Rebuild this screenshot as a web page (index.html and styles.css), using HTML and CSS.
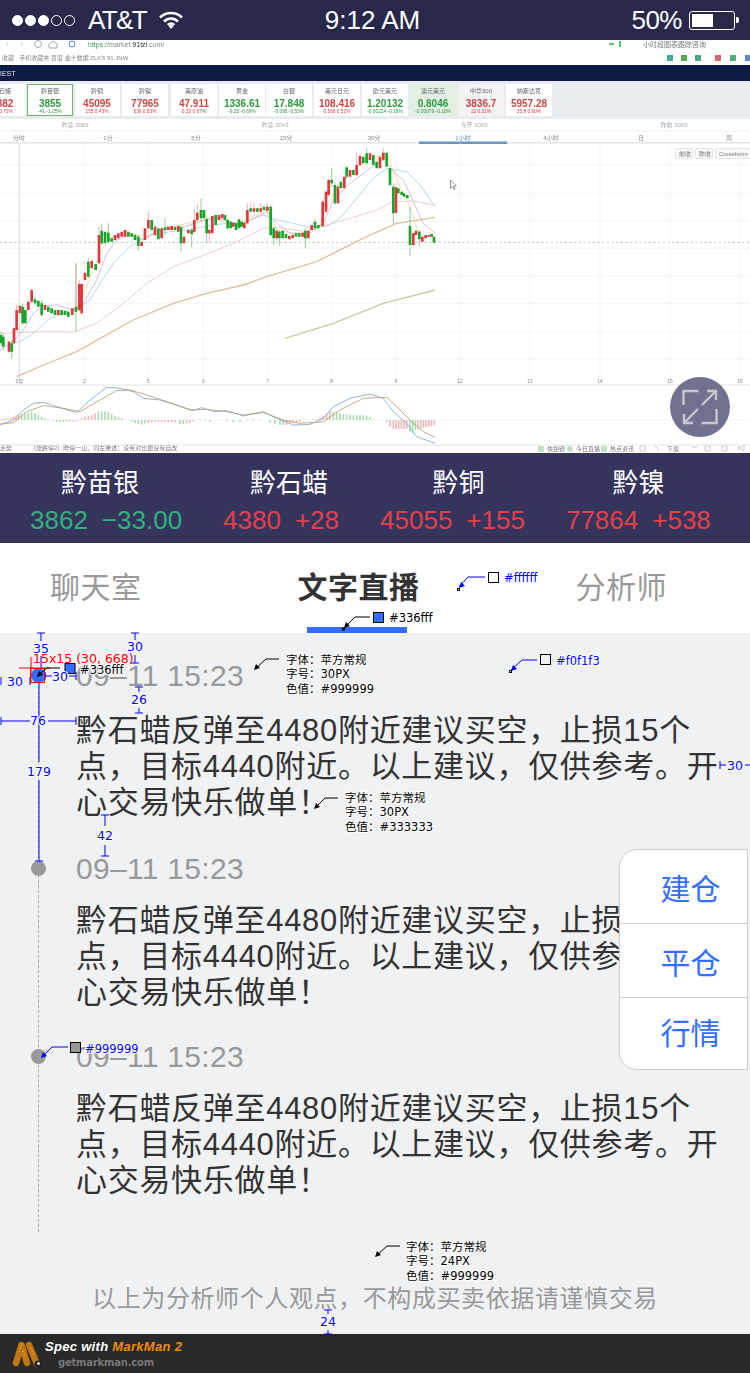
FILE: index.html
```html
<!DOCTYPE html>
<html lang="zh-CN">
<head>
<meta charset="utf-8">
<title>文字直播</title>
<link rel="stylesheet" href="styles.css">
</head>
<body>
<div class="page">
  <header class="status">
    <div class="status-left">
      <span class="sig"><i class="on"></i><i class="on"></i><i class="on"></i><i></i><i></i></span>
      <span class="carrier">AT&amp;T</span>
      <svg class="wifi" viewBox="0 0 24 18"><path d="M1 6.500C7 .5 17 .5 23 6.500" /><path d="M5 10.500c4-4 10-4 14 0"/><path d="M8.800 14c2-2 4.400-2 6.400 0"/><path class="wifi-dot" d="M12 18l-2.500-3c1.500-1.200 3.500-1.200 5 0z"/></svg>
    </div>
    <div class="status-time">9:12 AM</div>
    <div class="status-right"><span class="pct">50%</span><span class="batt"><i></i></span></div>
  </header>

  <section class="video">
    <svg class="shot" viewBox="0 40 750 413" aria-label="行情图">
      <rect x="0" y="40" width="750" height="413" fill="#fff"/>
      <!-- browser chrome -->
      <g class="t7" fill="#888">
        <text x="6" y="46.500" font-size="9" fill="#bbb">‹</text>
        <text x="20" y="46.500" font-size="9" fill="#bbb">›</text>
        <circle cx="38" cy="44" r="3.500" fill="none" stroke="#aaa"/>
        <path d="M49 47.500v-4l4-3 4 3v4z" fill="none" stroke="#aaa" transform="translate(0 .5)"/>
        <circle cx="72" cy="44" r="3" fill="none" stroke="#4a90d9"/>
        <text x="88" y="46.500"><tspan fill="#3c9a60">https://</tspan>market.<tspan fill="#333">91tzi</tspan>.com/</text>
        <text x="643" y="46.500" fill="#777">小时段图表跟踪咨询</text>
        <text x="2" y="60" font-size="6">收藏 · 手机收藏夹  百度  金十数据  ZLKS  91 JNW</text>
      </g>
      <path d="M609 44h5M620 41v6" stroke="#3a3" stroke-width="1.500"/>
      <g>
        <rect x="667" y="55" width="6" height="6" fill="#4a9"/><rect x="681" y="55" width="6" height="6" fill="#5a5"/>
        <rect x="695" y="55" width="6" height="6" fill="#4a8"/><rect x="715" y="55" width="6" height="6" fill="#d66"/>
        <rect x="730" y="55" width="6" height="6" fill="#5a7"/><rect x="745" y="55" width="5" height="6" fill="#58c"/>
      </g>
      <rect x="0" y="65" width="750" height="16" fill="#0c1a45"/>
      <text x="0" y="76" class="t7" fill="#dfe3ee">IEST</text>
      <rect x="0" y="81" width="750" height="38" fill="#e9ecee"/>
      <!-- quote tiles -->
      <g class="tile-bg" fill="#fff">
        <rect x="0" y="84" width="25" height="32"/>
        <rect x="27.500" y="84.500" width="45" height="31" stroke="#6fb56f" stroke-width="1"/>
        <rect x="75" y="84" width="45" height="32"/><rect x="122" y="84" width="46" height="32"/>
        <rect x="171" y="84" width="46" height="32"/><rect x="219" y="84" width="46" height="32"/>
        <rect x="266" y="84" width="46" height="32"/><rect x="314" y="84" width="46" height="32"/>
        <rect x="362" y="84" width="46" height="32"/><rect x="410" y="84" width="46" height="32" fill="#e4efe4"/>
        <rect x="458" y="84" width="46" height="32" fill="#f3f3f3"/><rect x="506" y="84" width="46" height="32"/>
      </g>
      <g class="tname" text-anchor="middle" fill="#666">
        <text x="5" y="93">石蜡</text><text x="50" y="93">黔苗银</text><text x="97" y="93">黔铜</text><text x="145" y="93">黔镍</text>
        <text x="194" y="93">美原油</text><text x="242" y="93">黄金</text><text x="289" y="93">白银</text><text x="337" y="93">美元日元</text>
        <text x="385" y="93">欧元美元</text><text x="433" y="93">澳元美元</text><text x="481" y="93">中华300</text><text x="529" y="93">纳斯达克</text>
      </g>
      <g class="tprice" text-anchor="middle">
        <text x="5" y="107" fill="#d04545">382</text><text x="50" y="107" fill="#2c9a3c">3855</text><text x="97" y="107" fill="#d04545">45095</text>
        <text x="145" y="107" fill="#d04545">77965</text><text x="194" y="107" fill="#d04545">47.911</text><text x="242" y="107" fill="#2c9a3c">1336.61</text>
        <text x="289" y="107" fill="#2c9a3c">17.848</text><text x="337" y="107" fill="#d04545">108.416</text><text x="385" y="107" fill="#2c9a3c">1.20132</text>
        <text x="433" y="107" fill="#2c9a3c">0.8046</text><text x="481" y="107" fill="#d04545">3836.7</text><text x="529" y="107" fill="#d04545">5957.28</text>
      </g>
      <g class="tsub" text-anchor="middle">
        <text x="6" y="113" fill="#d04545">0.71%</text><text x="50" y="113" fill="#2c9a3c">-41  -1.05%</text><text x="97" y="113" fill="#d04545">155  0.43%</text>
        <text x="145" y="113" fill="#d04545">639  0.83%</text><text x="194" y="113" fill="#d04545">0.32  0.67%</text><text x="242" y="113" fill="#2c9a3c">-9.25  -0.69%</text>
        <text x="289" y="113" fill="#2c9a3c">-0.095  -0.53%</text><text x="337" y="113" fill="#d04545">0.566  0.52%</text><text x="385" y="113" fill="#2c9a3c">-0.00224  -0.19%</text>
        <text x="433" y="113" fill="#2c9a3c">-0.00079  -0.10%</text><text x="481" y="113" fill="#d04545">12  0.31%</text><text x="529" y="113" fill="#d04545">35.8  0.60%</text>
      </g>
      <g class="tname" text-anchor="middle" fill="#aaa">
        <text x="75" y="127">昨总 3069</text><text x="275" y="127">昨总 3043</text><text x="474" y="127">今开 3069</text><text x="674" y="127">昨收 3069</text>
      </g>
      <path d="M0 131H750" stroke="#eee"/>
      <g class="tname" text-anchor="middle" fill="#888">
        <text x="19" y="140">分时</text><text x="108" y="140">1分</text><text x="196" y="140">5分</text><text x="286" y="140">15分</text><text x="374" y="140">30分</text>
        <text x="463" y="140" fill="#5b8fc7">1小时</text><text x="551" y="140">4小时</text><text x="641" y="140">日</text><text x="729" y="140">周</text>
      </g>
      <rect x="0" y="142" width="750" height="1.500" fill="#e4e4e4"/>
      <rect x="419" y="141.500" width="88" height="2.500" fill="#6b93bd"/>
      <!-- buttons -->
      <g fill="#fafafa" stroke="#e2e2e2">
        <rect x="675.500" y="148.500" width="17" height="10" rx="1.500"/><rect x="695.500" y="148.500" width="17" height="10" rx="1.500"/><rect x="715.500" y="148.500" width="40" height="10" rx="1.500"/>
      </g>
      <g class="tname" fill="#777">
        <text x="679" y="156">前收</text><text x="699" y="156">昨收</text><text x="719" y="156">Crosshairs</text>
      </g>
      <path d="M450.500 180v8.500l2-2 1.500 3 1.200-.6-1.500-2.900 2.600-.2z" fill="#fff" stroke="#666" stroke-width=".7"/>
      <text x="30" y="450" class="t6" fill="#777">（涨跌停2）昨停一山，同左重述；没有对比更没有自改</text>
      <text x="0" y="450" class="t6" fill="#777">走势</text>
      <g class="t6" fill="#777">
        <rect x="538" y="446" width="6" height="6" fill="#bfe3c8"/><text x="547" y="451">快捷键</text>
        <circle cx="570" cy="449" r="3" fill="#bfe3c8"/><text x="576" y="451">今日直播</text>
        <rect x="601" y="446" width="6" height="6" fill="#bfe3c8"/><text x="610" y="451">热点资讯</text>
        <text x="667" y="451">下载</text>
      </g>
      <path d="M640 446h5v5h-5zM655 446l4 4M692 447h5M705 446h5v5h-5zM722 446h5v5h-5zM738 447h3l3-2v6l-3-2h-3z" fill="none" stroke="#bbb" stroke-width=".8"/>

      <!-- chart drawn in 3x units -->
      <g transform="translate(0 140) scale(.33333)">
        <path class="grid" d="M0 75H2250M0 160H2250M0 243H2250M0 325H2250M0 408H2250M0 490H2250M0 575H2250M0 657H2250M253 10V735M445 10V735M610 10V735M803 10V735M995 10V735M1188 10V735M1380 10V735M1590 10V735M1800 10V735M2010 10V735M2220 10V735M0 840H2250"/>
        <path d="M58 10V735" stroke="#ddd" stroke-width="3" fill="none"/>
        <path d="M0 735H2250M0 915H2250" stroke="#e4e4e4" stroke-width="3" fill="none"/>
        <path d="M0 307H2250" stroke="#9cc0c8" stroke-width="2.500" stroke-dasharray="7 7" fill="none"/>
        <g class="axis" text-anchor="middle" fill="#888">
          <text x="58" y="728">9月</text><text x="253" y="728">2</text><text x="445" y="728">5</text><text x="610" y="728">6</text><text x="803" y="728">7</text><text x="995" y="728">8</text><text x="1188" y="728">9</text><text x="1380" y="728">12</text><text x="1590" y="728">13</text><text x="1800" y="728">14</text><text x="2010" y="728">15</text><text x="2220" y="728">16</text>
        </g>
        <!-- moving averages -->
        <polyline class="ma" stroke="#efd98e" points="228 505 260 440 300 340 330 295 380 280 440 290 500 262 590 245 640 232 700 255 800 210 830 270 900 282 960 255 985 190 1030 115 1100 60 1160 40 1190 120 1225 190 1260 290"/>
        <polyline class="ma" stroke="#a9cde6" points="30 615 60 605 100 580 150 535 190 520 240 500 270 480 300 430 340 370 390 320 420 300 460 285 510 275 560 270 610 260 680 250 740 245 790 225 830 240 880 250 930 262 980 260 1020 235 1070 175 1120 115 1160 85 1220 95 1260 135 1305 200"/>
        <polyline class="ma" stroke="#cfaee0" points="0 630 40 605 70 570 100 520 130 497 170 495 220 510 250 490 290 420 320 340 350 300 390 285 430 300 470 270 540 265 600 245 650 232 720 255 800 215 830 250 870 280 930 280 970 250 1000 180 1050 130 1110 85 1150 60 1180 95 1210 120 1240 185 1270 250 1305 280"/>
        <polyline class="ma" stroke="#ecc2c4" points="0 580 60 578 130 575 220 576 290 550 370 490 440 430 520 380 600 350 700 310 790 265 830 262 920 275 980 255 1050 235 1130 210 1180 185 1240 183 1305 195"/>
        <polyline class="ma thick" stroke="#dcc096" points="50 710 130 675 230 635 310 590 400 540 520 490 620 460 730 435 800 410 950 365 1010 335 1100 290 1190 250 1305 232"/>
        <polyline class="ma thick" stroke="#c8c99c" points="855 595 1000 550 1150 490 1305 450"/>
        <!-- wicks -->
        <path class="wick-g" d="M3 575V620M10 580V630M35 600V655M68 490V555M105 470V495M125 480V530M228 370V575M265 355V415M305 250V315M325 250V310M415 285V332M495 235V285M543 255V335M575 265V322M603 175V245M620 230V310M683 235V270M812 195V290M821 260V315M838 270V318M916 265V325M945 235V270M995 85V140M1005 130V195M1040 80V115M1100 25V75M1180 130V252M1230 200V348M1258 270V318"/>
        <path class="wick-r" d="M27 600V640M50 495V575M95 448V490M228 370V500M238 420V515M245 430V525M297 258V372M445 215V268M465 255V290M583 205V280M592 190V245M628 265V310M742 190V252M752 188V215M762 188V218M782 190V215M802 190V218M830 268V300M968 180V262M978 150V218M986 115V170M1014 135V192M1070 40V108M1080 40V78M1150 25V62M1188 140V222M1240 275V318"/>
        <!-- candle bodies -->
        <path class="up" d="M27 605V635M42 565V610M50 510V570M60 497V520M85 485V510M95 450V485M135 495V510M175 510V525M217 505V525M238 432V510M245 432V520M255 398V420M275 362V385M297 285V370M345 285V300M355 280V295M365 275V290M375 270V290M425 305V318M435 265V300M445 240V265M465 260V285M485 265V295M505 260V270M515 258V270M535 258V275M552 290V310M565 270V280M583 240V275M592 218V240M628 270V280M637 228V280M657 225V240M667 222V235M700 248V260M733 248V265M742 210V250M762 205V215M782 205V215M802 200V212M830 272V295M868 288V298M878 285V295M908 278V290M925 272V295M935 255V270M968 185V258M978 155V215M986 120V165M1014 140V190M1033 110V145M1050 90V110M1070 75V105M1080 48V75M1110 40V60M1140 50V85M1150 38V60M1188 142V218M1240 280V315M1248 272V285M1267 290V305M1277 285V295M1287 285V290"/>
        <path class="down" d="M3 585V610M10 590V620M35 610V635M68 500V550M76 510V550M105 478V490M115 482V500M125 490V525M145 500V515M155 505V520M165 510V525M185 510V525M195 512V525M205 515V530M228 500V515M265 365V410M287 372V390M305 272V310M315 275V310M325 278V305M335 295V305M385 275V290M395 280V290M405 285V300M415 290V318M455 240V270M475 265V298M495 262V270M525 260V270M543 262V310M575 270V282M603 210V235M612 210V235M620 237V280M647 225V255M675 225V240M683 240V265M692 245V265M708 250V270M717 238V265M725 245V260M752 205V215M772 205V215M792 200V210M812 200V285M821 265V295M838 275V295M848 272V295M858 282V295M888 280V290M898 280V290M916 272V295M945 245V265M955 255V265M995 120V130M1005 135V190M1023 125V145M1040 82V110M1060 90V105M1090 50V70M1100 40V70M1120 45V75M1130 65V85M1160 38V80M1170 85V135M1180 140V220M1195 145V160M1205 155V165M1212 160V170M1222 165V175M1230 258V315M1258 275V298M1295 282V290M1302 290V308"/>
        <!-- MACD histogram -->
        <path class="hg" d="M65 822V840M75 820V840M85 819V840M95 816V840M105 820V840M115 825V840M125 830V840M135 835V840M145 838V840M160 840V844M170 840V845M180 840V845M190 840V846M200 840V846M295 815V840M305 814V840M315 815V840M325 817V840M335 822V840M345 828V840M355 832V840M365 835V840M395 840V845M405 840V849M415 840V852M425 840V854M435 840V850M540 840V852M550 840V852M615 840V843M630 840V845M680 840V844M700 840V846M720 840V846M810 840V848M825 840V852M840 840V855M850 840V856M1000 815V840M1010 818V840M1020 820V840M1030 822V840M1040 822V840M1050 824V840M1060 825V840M1070 826V840M1080 826V840M1090 826V840M1100 827V840M1110 832V840M1120 838V840M1160 840V846M1230 840V875M1238 840V878M1246 840V870"/>
        <path class="hr" d="M0 836V840M8 836V840M16 835V840M24 836V840M32 834V840M40 830V840M48 826V840M56 822V840M210 840V845M220 840V845M230 840V844M245 835V840M255 830V840M265 827V840M275 824V840M285 820V840M445 840V848M455 840V846M465 840V846M475 840V846M485 840V846M495 840V846M505 840V846M515 840V847M525 840V848M560 840V850M570 840V848M580 840V846M600 838V840M740 838V840M760 837V840M780 838V840M860 840V854M870 840V852M880 840V850M890 840V848M900 840V846M940 838V840M950 836V840M960 834V840M970 828V840M980 820V840M990 812V840M1170 840V860M1180 840V866M1188 840V868M1196 840V868M1204 840V867M1212 840V866M1220 840V866M1254 840V868M1262 840V866M1270 840V864M1278 840V862M1286 840V860M1294 840V858M1302 840V856"/>
        <polyline class="ma" stroke="#7ba3d6" points="0 855 40 840 70 810 100 790 130 787 170 800 230 818 270 780 320 742 360 745 400 755 430 775 480 780 530 795 580 812 605 803 640 815 680 812 730 828 790 815 830 835 880 855 930 853 970 835 1000 800 1050 775 1110 762 1150 775 1180 815 1220 850 1250 890 1305 910"/>
        <polyline class="ma" stroke="#b49a6c" points="0 852 40 848 80 815 130 797 190 805 240 815 300 780 350 752 390 750 440 765 500 785 570 810 620 808 680 815 730 825 790 818 850 840 900 850 970 845 1020 810 1090 775 1160 772 1200 810 1240 850 1270 875 1305 892"/>
      </g>
    </svg>
    <svg class="close-x" viewBox="0 0 16 16"><path d="M1 1l14 14M15 1L1 15"/></svg>
    <button class="expand" aria-label="全屏">
      <svg viewBox="0 0 60 60"><path d="M13.500 28V14H28.500M46.500 32V46H31.500M32 28L45 15M37 14H46V23M28 32L15 45M23 46H14V37"/></svg>
    </button>
  </section>

  <section class="quotes">
    <div class="quote"><div class="q-name n1">黔苗银</div><div class="q-val green"><span>3862</span><span>−33.00</span></div></div>
    <div class="quote"><div class="q-name n2">黔石蜡</div><div class="q-val red"><span>4380</span><span>+28</span></div></div>
    <div class="quote"><div class="q-name n3">黔铜</div><div class="q-val red"><span>45055</span><span>+155</span></div></div>
    <div class="quote"><div class="q-name">黔镍</div><div class="q-val red"><span>77864</span><span>+538</span></div></div>
  </section>

  <nav class="tabs">
    <div class="tab">聊天室</div>
    <div class="tab active">文字直播</div>
    <div class="tab">分析师</div>
  </nav>

  <main class="feed">
    <ol class="timeline">
      <li class="entry first">
        <div class="date">09–11 15:23</div>
        <p class="msg">黔石蜡反弹至4480附近建议买空，止损15个点，目标4440附近。以上建议，仅供参考。开心交易快乐做单！</p>
      </li>
      <li class="entry">
        <div class="date">09–11 15:23</div>
        <p class="msg">黔石蜡反弹至4480附近建议买空，止损15个点，目标4440附近。以上建议，仅供参考。开心交易快乐做单！</p>
      </li>
      <li class="entry">
        <div class="date">09–11 15:23</div>
        <p class="msg">黔石蜡反弹至4480附近建议买空，止损15个点，目标4440附近。以上建议，仅供参考。开心交易快乐做单！</p>
      </li>
    </ol>
    <p class="disclaimer">以上为分析师个人观点，不构成买卖依据请谨慎交易</p>
    <div class="menu">
      <div class="menu-item r1">建仓</div>
      <div class="menu-item r2">平仓</div>
      <div class="menu-item r3">行情</div>
    </div>
  </main>

  <footer class="mm">
    <svg class="mm-logo" viewBox="0 0 34 30">
      <path d="M5 24L10.500 6L16 24" class="mm-leg"/>
      <path d="M18 6L26 25" class="mm-leg"/>
      <path d="M10.500 6L8 13M20 9l3 8M12 12l2 6" class="mm-dots"/>
      <circle cx="27" cy="25" r="3.500" fill="#222"/><circle cx="27.500" cy="24.500" r="1.500" fill="#ddd"/>
    </svg>
    <div class="mm-text">
      <div class="mm-line1">Spec with <b>MarkMan 2</b></div>
      <div class="mm-line2">getmarkman.com</div>
    </div>
  </footer>

  <!-- MarkMan annotations -->
  <svg class="marks" viewBox="0 0 750 1373">
    <g class="m-blue-line">
      <path d="M41 633V641M37 633H45M41 656V668"/>
      <path d="M135 633V640M131 633H139M135 655V663M131 663H139"/>
      <path d="M1 677V685M30 677V685"/>
      <path d="M45 676H52M69 676H76M45 672V680M76 672V680"/>
      <path d="M139 687V692M135 687H143M139 708V713M135 713H143"/>
      <path d="M1 717V725M1 721H30M48 721H76M76 717V725"/>
      <path d="M39 683V762M39 780V861M35 861H43"/>
      <path d="M105 815V826M101 815H109M105 845V856M101 856H109"/>
      <path d="M328 1310V1314M324 1310H332M328 1330V1334M324 1334H332"/>
      <path d="M720 761V769M720 765H726M745 765H750"/>
    </g>
    <g class="m-red-line">
      <path d="M19 668H50M31 657V682"/>
      <rect x="30.500" y="668.500" width="14" height="14"/>
    </g>
    <g class="m-arrow-k">
      <path d="M60 668H47L37 676"/><path d="M37 677l2-6 4 4z" class="k"/>
      <path d="M279 659H266L255 669"/><path d="M254 670l2-6 4 4z" class="k"/>
      <path d="M338 798H325L315 808"/><path d="M314 809l2-6 4 4z" class="k"/>
      <path d="M400 1246H387L376 1256"/><path d="M375 1257l2-6 4 4z" class="k"/>
      <path d="M370 617H355L345 627"/><path d="M344 628l2-6 4 4z" class="k"/>
    </g>
    <g class="m-arrow-b">
      <path d="M485 577H468L459 587"/><path d="M459 588l2-6 4 4z" class="b"/>
      <path d="M537 660H522L511 670"/><path d="M511 671l2-6 4 4z" class="b"/>
      <path d="M68 1047H52L42 1057"/><path d="M41 1058l2-6 4 4z" class="b"/>
    </g>
    <g class="m-swatch">
      <rect x="488.500" y="572.500" width="10" height="10" fill="#fff"/>
      <rect x="373.500" y="612.500" width="10" height="10" fill="#336fff"/>
      <rect x="540.500" y="654.500" width="10" height="10" fill="#f0f1f3"/>
      <rect x="65" y="663.500" width="10" height="10" fill="#336fff"/>
      <rect x="70.500" y="1042.500" width="10" height="10" fill="#999"/>
      <rect x="457.500" y="588.500" width="2" height="2" fill="#fff"/>
      <rect x="509.500" y="670.500" width="2" height="2" fill="#fff"/>
      <rect x="342.500" y="628" width="2" height="2" fill="#c80" stroke="#a60"/>
    </g>
    <g class="m-num blue" text-anchor="middle">
      <text x="41" y="653">35</text><text x="135" y="651">30</text><text x="15" y="686">30</text><text x="60" y="681">30</text>
      <text x="139" y="704">26</text><text x="38" y="725">76</text><text x="39" y="776">179</text><text x="105" y="840">42</text>
      <text x="328" y="1326">24</text><text x="735" y="770">30</text>
    </g>
    <text class="m-num red" x="33" y="663">15x15 (30, 668)</text>
    <g class="m-num blue small">
      <text x="504" y="582">#ffffff</text><text x="556" y="665">#f0f1f3</text><text x="85" y="1053">#999999</text>
    </g>
    <g class="m-num black small">
      <text x="80" y="674">#336fff</text><text x="389" y="622">#336fff</text>
    </g>
    <g class="m-note">
      <text x="286" y="664">字体：苹方常规</text><text x="286" y="678">字号：30PX</text><text x="286" y="693">色值：#999999</text>
      <text x="345" y="802">字体：苹方常规</text><text x="345" y="816">字号：30PX</text><text x="345" y="831">色值：#333333</text>
      <text x="406" y="1251">字体：苹方常规</text><text x="406" y="1265">字号：24PX</text><text x="406" y="1280">色值：#999999</text>
    </g>
  </svg>
</div>
</body>
</html>
```

FILE: styles.css
```css
* { box-sizing: border-box; }
html, body { margin: 0; padding: 0; }
body {
  background: #f0f1f3;
  font-family: "Liberation Sans", "Noto Sans CJK SC", sans-serif;
  color: #333;
}
.page { position: relative; width: 750px; height: 1373px; overflow: hidden; display: flex; flex-direction: column; }

/* status bar */
.status {
  height: 40px; flex: none; background: #28284a; color: #fff;
  display: flex; align-items: center; justify-content: space-between;
  padding: 0 15px 0 12px; font-size: 26px; position: relative;
}
.status-left { display: flex; align-items: center; width: 200px; }
.sig { display: flex; gap: 2px; margin-right: 13px; }
.sig i { width: 11px; height: 11px; border-radius: 50%; border: 1px solid #fff; }
.sig i.on { background: #fff; }
.carrier { letter-spacing: -1.6px; }
.wifi { width: 24px; height: 18px; margin-left: 13px; fill: none; stroke: #fff; stroke-width: 2.6; }
.wifi-dot { fill: #fff; stroke: none; }
.status-time { flex: none; margin-left: -2px; }
.status-right { display: flex; align-items: center; width: 200px; justify-content: flex-end; gap: 7px; }
.pct { letter-spacing: -.5px; }
.batt { position: relative; display: block; width: 46px; height: 19px; border: 1.5px solid #fff; border-radius: 3px; padding: 2px; }
.batt i { display: block; width: 21px; height: 100%; background: #fff; }
.batt::after { content: ""; position: absolute; right: -5px; top: 5px; width: 3px; height: 6px; background: #fff; border-radius: 0 2px 2px 0; }

/* chart screenshot */
.video { position: relative; height: 413px; flex: none; overflow: hidden; }
.shot { display: block; width: 750px; height: 413px; filter: blur(.5px); }
.t7 { font-size: 7px; font-family: "Liberation Sans", "Noto Sans CJK SC", sans-serif; }
.t6 { font-size: 6px; font-family: "Liberation Sans", "Noto Sans CJK SC", sans-serif; }
.tname { font-size: 6px; }
.tprice { font-size: 10px; font-weight: 700; font-family: "Liberation Sans", sans-serif; }
.tsub { font-size: 4.800px; }
.grid { stroke: #f3f3f3; stroke-width: 2.5; fill: none; }
.axis { font-size: 15px; }
.ma { fill: none; stroke-width: 2.5; stroke-linejoin: round; }
.ma.thick { stroke-width: 4; }
.wick-g, .wick-r { fill: none; stroke-width: 2.5; }
.wick-g { stroke: #82c68a; }
.wick-r { stroke: #eaa5a5; }
.up, .down { fill: none; stroke-width: 8; }
.up { stroke: #e0383b; }
.down { stroke: #17a52a; }
.hg, .hr { fill: none; stroke-width: 5; }
.hg { stroke: #a9dcae; }
.hr { stroke: #f1b8b8; }
.close-x { position: absolute; left: 691px; top: 41px; width: 16px; height: 16px; fill: none; stroke: #f2f4f6; stroke-width: 1; opacity: .8; }
.expand {
  position: absolute; left: 670px; top: 337px; width: 60px; height: 60px; padding: 0;
  border: 0; border-radius: 50%; background: #70708f;
}
.expand svg { display: block; width: 60px; height: 60px; fill: none; stroke: #c6c6cc; stroke-width: 2.4; }

/* quote strip */
.quotes {
  height: 90px; flex: none; background: #35345c;
  display: flex; gap: 41px; padding: 14px 0 0 30px;
}
.quote { display: flex; flex-direction: column; align-items: center; }
.q-name { color: #fff; font-size: 26px; line-height: 32px; }
.q-name.n1 { padding-right: 12px; }
.q-name.n2 { padding-left: 16px; }
.q-name.n3 { padding-left: 12px; }
.q-val { display: flex; gap: 14px; font-size: 26px; line-height: 30px; margin-top: 6px; white-space: nowrap; }
.green { color: #2fb27a; }
.red { color: #e5404a; }

/* tabs */
.tabs {
  height: 90px; flex: none; background: #fff;
  display: flex; align-items: center; gap: 156px; padding-left: 50px;
  font-size: 30px; color: #999; letter-spacing: .5px;
}
.tab { position: relative; line-height: 90px; }
.tab.active { color: #333; font-weight: 700; }
.tab.active::after {
  content: ""; position: absolute; left: 9px; bottom: 0; width: 100px; height: 6px; background: #336fff;
}

/* feed */
.feed { position: relative; flex: 1; background: #f0f1f3; padding-top: 25px; }
.timeline { list-style: none; margin: 0; padding: 0 28px 0 76px; position: relative; }
.timeline::before {
  content: ""; position: absolute; left: 38px; top: 18px; height: 556px;
  border-left: 1px dashed #aaa;
}
.entry { position: relative; margin-bottom: 28px; }
.entry::before {
  content: ""; position: absolute; left: -45px; top: 10px; width: 15px; height: 15px; border-radius: 50%; background: #999;
}
.entry.first::before { background: #336fff; }
.date { font-size: 30px; line-height: 36px; color: #999; letter-spacing: .3px; }
.msg { margin: 16px 0 0; font-size: 31px; line-height: 36px; letter-spacing: .7px; color: #333; }
.entry.first .msg { margin-top: 19px; }
.entry.first { margin-bottom: 30px; }
.disclaimer { position: absolute; left: 0; right: 0; top: 651px; margin: 0; text-align: center; font-size: 24px; line-height: 30px; letter-spacing: .6px; color: #999; }

.menu {
  position: absolute; left: 619px; top: 216px; width: 129px; height: 221px;
  background: #fff; border: 1px solid #ccc; border-radius: 18px 0 0 18px;
  display: flex; flex-direction: column;
}
.menu-item { flex: none; display: flex; align-items: center; justify-content: center; padding-left: 14px; font-size: 30px; color: #336fff; }
.menu-item + .menu-item { border-top: 1px solid #ccc; }
.menu-item.r1 { height: 73px; }
.menu-item.r2 { height: 74px; }
.menu-item.r3 { height: 72px; padding-bottom: 5px; }

/* markman strip */
.mm { height: 39px; flex: none; background: #292929; display: flex; align-items: center; padding-left: 11px; gap: 0; }
.mm-logo { width: 34px; height: 30px; flex: none; }
.mm-leg { fill: none; stroke: #c17614; stroke-width: 6.5; stroke-linecap: round; stroke-linejoin: round; }
.mm-dots { fill: none; stroke: #eab25a; stroke-width: 1.5; stroke-dasharray: 1 2; }
.mm-text { line-height: 1; }
.mm-line1 { font: italic 700 13px "Liberation Sans", sans-serif; letter-spacing: .3px; color: #fff; }
.mm-line1 b { color: #f08c00; }
.mm-line2 { font: 700 10px "DejaVu Sans", sans-serif; color: #777; margin: 3px 0 0 13px; letter-spacing: -.2px; }

/* annotations */
.marks { position: absolute; left: 0; top: 0; width: 750px; height: 1373px; pointer-events: none; }
.m-blue-line path { fill: none; stroke: #00f; stroke-width: 1; }
.m-red-line path, .m-red-line rect { fill: none; stroke: #f00; stroke-width: 1; }
.m-arrow-k path { fill: none; stroke: #000; stroke-width: 1; }
.m-arrow-b path { fill: none; stroke: #00f; stroke-width: 1; }
.m-arrow-k path.k { fill: #000; stroke: none; }
.m-arrow-b path.b { fill: #00f; stroke: none; }
.m-swatch rect { stroke: #000; stroke-width: 1; }
.m-num { font: 12.500px "DejaVu Sans", sans-serif; paint-order: stroke; stroke: #fff; stroke-width: 2px; stroke-linejoin: round; }
.m-num.blue { fill: #00f; }
.m-num.red { fill: #f00; stroke: none; }
.m-num.black { fill: #000; }
.m-num.small { font-size: 11.500px; }
.m-note { font: 11.500px "DejaVu Sans", "Noto Sans CJK SC", sans-serif; fill: #000; paint-order: stroke; stroke: #fff; stroke-width: 2px; stroke-linejoin: round; }
```
